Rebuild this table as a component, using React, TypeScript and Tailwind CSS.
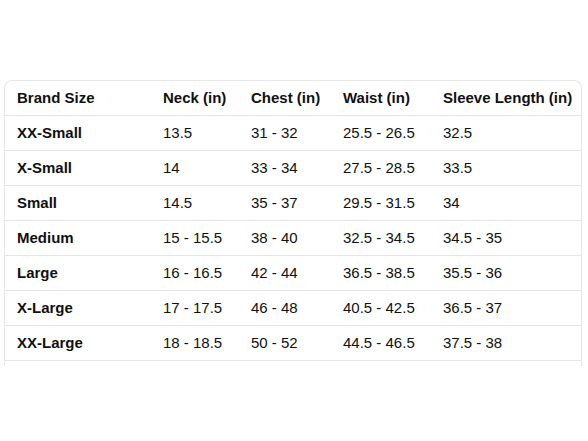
const headers = ['Brand Size', 'Neck (in)', 'Chest (in)', 'Waist (in)', 'Sleeve Length (in)']

const rows = [
  ['XX-Small', '13.5', '31 - 32', '25.5 - 26.5', '32.5'],
  ['X-Small', '14', '33 - 34', '27.5 - 28.5', '33.5'],
  ['Small', '14.5', '35 - 37', '29.5 - 31.5', '34'],
  ['Medium', '15 - 15.5', '38 - 40', '32.5 - 34.5', '34.5 - 35'],
  ['Large', '16 - 16.5', '42 - 44', '36.5 - 38.5', '35.5 - 36'],
  ['X-Large', '17 - 17.5', '46 - 48', '40.5 - 42.5', '36.5 - 37'],
  ['XX-Large', '18 - 18.5', '50 - 52', '44.5 - 46.5', '37.5 - 38'],
]

export default function App() {
  return (
    <div
      className="w-[588px] h-[441px] bg-white pt-[80px] pl-[4px] text-[#0f1111]"
      style={{ fontFamily: '"Liberation Sans", Arial, sans-serif' }}
    >
      {/* Size chart card, cut off at the bottom */}
      <div className="w-[578px] h-[286px] overflow-hidden rounded-t-[8px] border-x border-t border-[#e7e7e7]">
        <table className="w-full table-fixed border-separate border-spacing-0 text-[15px]">
          <colgroup>
            <col className="w-[146px]" />
            <col className="w-[88px]" />
            <col className="w-[92px]" />
            <col className="w-[100px]" />
            <col />
          </colgroup>
          <thead>
            <tr>
              {headers.map((h) => (
                <th
                  key={h}
                  className="h-[35px] px-3 text-left font-bold whitespace-nowrap border-b border-[#e3e6e6]"
                >
                  {h}
                </th>
              ))}
            </tr>
          </thead>
          <tbody>
            {rows.map((row) => (
              <tr key={row[0]}>
                {row.map((cell, i) => (
                  <td
                    key={i}
                    className={`h-[35px] px-3 whitespace-nowrap border-b border-[#e3e6e6] ${i === 0 ? 'font-bold' : ''}`}
                  >
                    {cell}
                  </td>
                ))}
              </tr>
            ))}
          </tbody>
        </table>
      </div>
    </div>
  )
}
